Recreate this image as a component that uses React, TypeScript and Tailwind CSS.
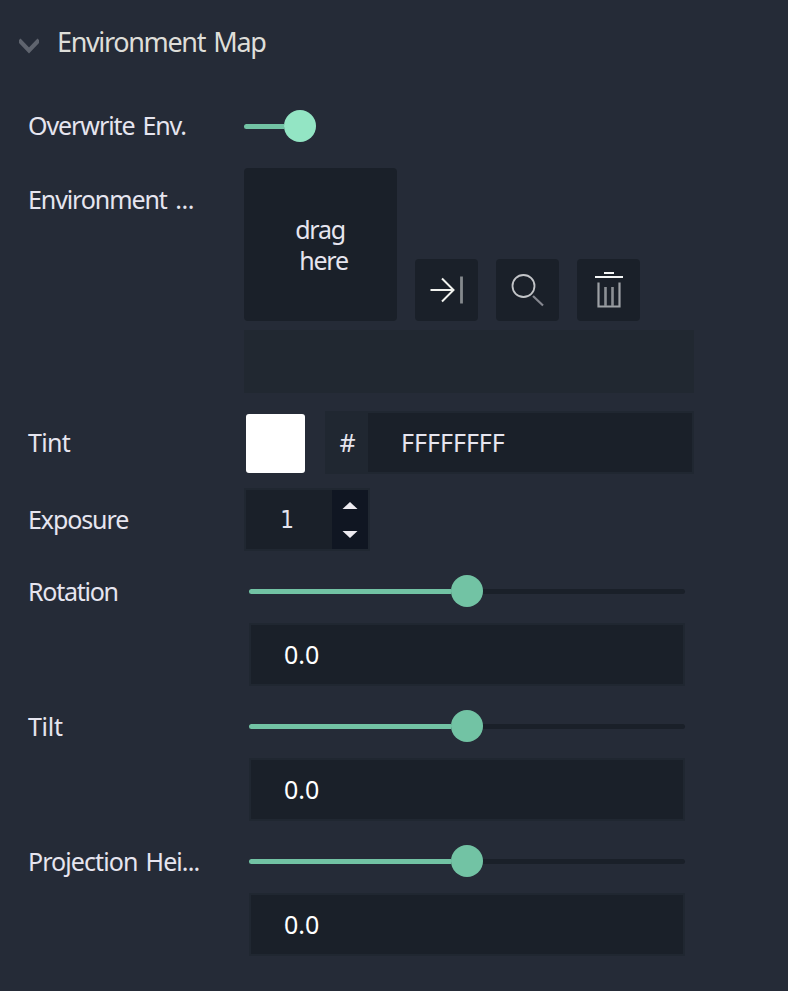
import type { ReactNode } from "react";

function Label({ children, tracking = "" }: { children: ReactNode; tracking?: string }) {
  return <div className={`w-[216px] shrink-0 whitespace-nowrap pb-0.5 leading-[30px] ${tracking}`}>{children}</div>;
}

function IconButton({ label, children }: { label: string; children: ReactNode }) {
  return (
    <button aria-label={label} className="h-[62px] w-[63px] rounded bg-[#1a2029]">
      <svg width="63" height="62" viewBox="0 0 63 62" fill="none">
        {children}
      </svg>
    </button>
  );
}

function SliderRow({ label, tracking }: { label: string; tracking: string }) {
  return (
    <div className="flex h-[135px] items-start">
      <div className="pt-3">
        <Label tracking={tracking}>{label}</Label>
      </div>
      <div className="ml-[5px] w-[436px]">
        <div className="flex h-[59px] items-center pb-1">
          <div className="h-[5px] w-[202px] rounded-l-full bg-[#72c3a4]" />
          <div className="mb-px size-8 shrink-0 rounded-full bg-[#72c3a4]" />
          <div className="h-[5px] grow rounded-r-full bg-[#1a2029]" />
        </div>
        <div className="flex h-[63px] items-center border-2 border-[#202731] bg-[#1a2029] pl-[33px] text-white tracking-[0px]">
          0.0
        </div>
      </div>
    </div>
  );
}

export default function App() {
  return (
    <div className="h-[991px] w-[788px] overflow-hidden bg-[#252b37] font-['Noto_Sans',sans-serif] text-[25px] text-[#e6e5ef]">
      <div className="flex h-[84px] items-center pl-[19px]">
        <svg className="mt-2 shrink-0" width="20" height="16" viewBox="0 0 20 16" fill="none">
          <path d="M0 2 10 12.5 20 2" stroke="#5f646e" strokeWidth="4.2" />
        </svg>
        <h1 className="ml-[18px] text-[27px] leading-8 tracking-[-1.35px] [word-spacing:2.5px] text-[#deded9]">Environment Map</h1>
      </div>
      <div className="pl-7">
        <div className="flex h-[84px] items-center">
          <Label tracking="tracking-[-1.08px] [word-spacing:2.5px]">Overwrite Env.</Label>
          <div className="h-[5px] w-10 rounded-l-full bg-[#72c3a4]" />
          <div className="size-8 rounded-full bg-[#93e5c4]" />
        </div>
        <div className="flex">
          <div className="pt-4">
            <Label tracking="tracking-[-1.1px] [word-spacing:3px]">
              Environment <span className="tracking-[-0.4px]">...</span>
            </Label>
          </div>
          <div className="w-[450px]">
            <div className="flex items-end gap-[18px]">
              <div className="flex size-[153px] items-center justify-center rounded bg-[#1a2029] leading-[31px] tracking-[-1.2px]">
                <div className="pl-0.5">
                  drag
                  <div className="pl-1">here</div>
                </div>
              </div>
              <IconButton label="Apply">
                <path d="M15.5 31H38M27 19.5 38.5 31 27 42.5" stroke="#f1f3ef" strokeWidth="2" />
                <path d="M46.5 17.5V44.5" stroke="#85898d" strokeWidth="2.8" />
              </IconButton>
              <IconButton label="Search">
                <circle cx="27.5" cy="27" r="11" stroke="#c3c5c8" strokeWidth="1.8" />
                <path d="M37 37 47 46.5" stroke="#85878f" strokeWidth="2.2" />
              </IconButton>
              <IconButton label="Delete">
                <path d="M18 18H46M27 14H37" stroke="#f3f5f5" strokeWidth="2" />
                <path d="M21.5 23.5V47.5H42.5V23.5" stroke="#9da1a5" strokeWidth="2.2" />
                <path d="M28.5 28V47M35.5 28V47" stroke="#8b8f94" strokeWidth="2.6" />
              </IconButton>
            </div>
            <div className="mt-[9px] h-[63px] bg-[#212831]" />
          </div>
        </div>
        <div className="mt-[18px] flex h-[63px] items-center">
          <Label tracking="tracking-[-0.7px]">Tint</Label>
          <div className="ml-0.5 mt-px h-[59px] w-[59px] rounded-[3px] bg-white" />
          <div className="ml-5 flex h-[63px] w-[369px] border-y-2 border-r-2 border-[#202731]">
            <div className="flex w-[43px] items-center justify-center bg-[#202731] pl-0.5">#</div>
            <div className="flex grow items-center bg-[#1a2029] pl-[33px] tracking-[0px]">FFFFFFFF</div>
          </div>
        </div>
        <div className="mt-[14px] flex h-[63px] items-center">
          <Label tracking="tracking-[-1.1px]">Exposure</Label>
          <div className="flex h-[63px] w-[126px] border-2 border-[#202731]">
            <div className="flex w-[86px] items-center justify-center bg-[#1a2029] pr-1 font-['DejaVu_Sans_Condensed','DejaVu_Sans',sans-serif] text-[24px]">1</div>
            <div className="flex w-9 flex-col items-center justify-center gap-[22px] bg-[#101622] pt-px">
              <svg width="16" height="7" viewBox="0 0 16 7"><path d="M0.5 7 8 0 15.5 7Z" fill="#edebf0" /></svg>
              <svg width="16" height="7" viewBox="0 0 16 7"><path d="M0.5 0 8 7 15.5 0Z" fill="#edebf0" /></svg>
            </div>
          </div>
        </div>
        <div className="mt-[13px]">
          <SliderRow label="Rotation" tracking="tracking-[-1.25px]" />
          <SliderRow label="Tilt" tracking="tracking-[-0.3px]" />
          <SliderRow label="Projection Hei..." tracking="tracking-[-0.92px] [word-spacing:2.5px]" />
        </div>
      </div>
    </div>
  );
}
